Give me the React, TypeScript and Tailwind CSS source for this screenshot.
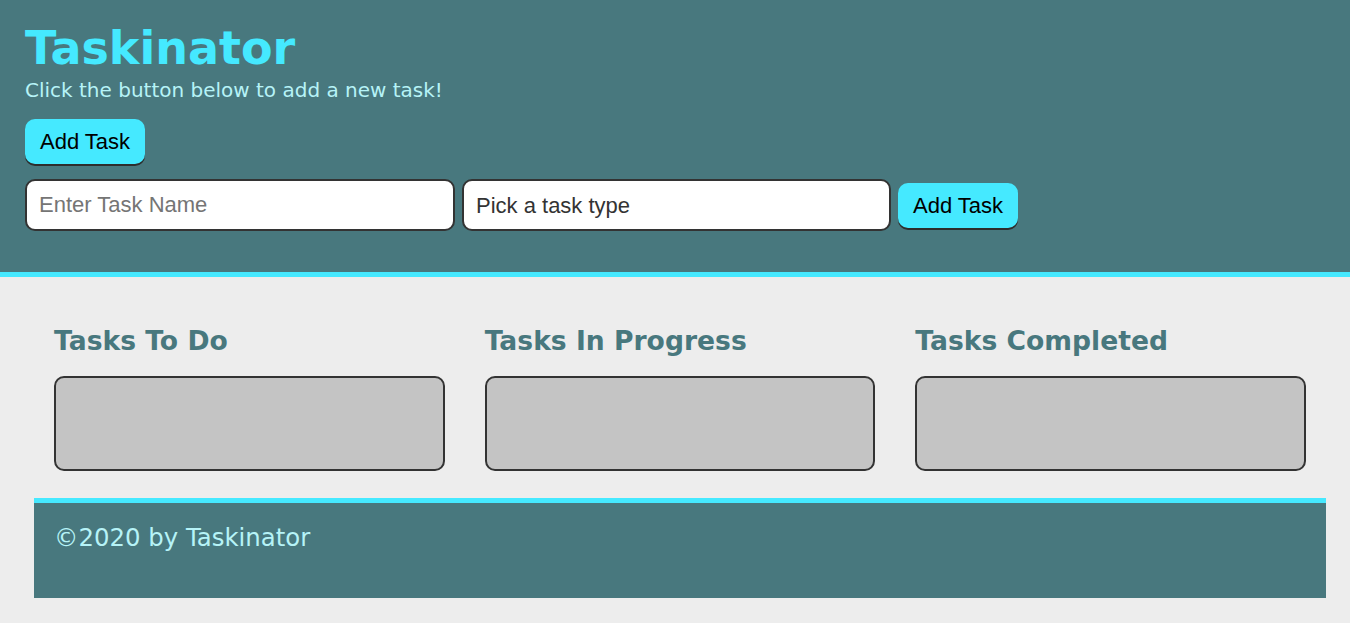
import React from 'react';

const columns = ['Tasks To Do', 'Tasks In Progress', 'Tasks Completed'];

export default function App() {
  return (
    <div className="min-h-[623px] bg-[#ededed] font-['DejaVu_Sans',Verdana,sans-serif]">
      {/* Header */}
      <header className="bg-[#48787e] border-b-[5px] border-[#45e9ff] px-[25px] pt-[20px] pb-[41px]">
        <h1 className="text-[46px] leading-[56px] font-bold text-[#45e9ff]">Taskinator</h1>
        <p className="text-[20px] leading-[28px] text-[#b6f3f7]">Click the button below to add a new task!</p>
        <button className="mt-[15px] h-[45px] px-[15px] rounded-[10px] bg-[#45e9ff] text-black text-[22px] font-['Liberation_Sans',Arial,sans-serif] shadow-[0_2px_0_#2d2d2d]">
          Add Task
        </button>
        <form className="mt-[15px] flex items-center gap-[7px]" onSubmit={e => e.preventDefault()}>
          <input
            type="text"
            placeholder="Enter Task Name"
            className="w-[430px] h-[52px] px-[12px] rounded-[10px] border-2 border-[#333] bg-white text-[22px] font-['Liberation_Sans',Arial,sans-serif] placeholder:text-[#757575] outline-none"
          />
          <div className="w-[429px] h-[52px] px-[12px] rounded-[10px] border-2 border-[#333] bg-white flex items-center text-[22px] text-[#333] font-['Liberation_Sans',Arial,sans-serif]">
            Pick a task type
          </div>
          <button className="h-[45px] px-[15px] rounded-[10px] bg-[#45e9ff] text-black text-[22px] font-['Liberation_Sans',Arial,sans-serif] shadow-[0_2px_0_#2d2d2d]">
            Add Task
          </button>
        </form>
      </header>

      {/* Task columns */}
      <main className="ml-[34px] mr-[24px] pt-[48px] grid grid-cols-3">
        {columns.map(title => (
          <section key={title} className="px-5">
            <h2 className="text-[26.6px] leading-[32px] font-bold text-[#48787e]">{title}</h2>
            <div className="mt-[19px] h-[95px] rounded-[10px] border-2 border-[#333] bg-[#c4c4c4]" />
          </section>
        ))}
      </main>

      {/* Footer */}
      <footer className="ml-[34px] mr-[24px] mt-[27px] h-[100px] bg-[#48787e] border-t-[5px] border-[#45e9ff] px-5 pt-[20px]">
        <p className="text-[24.4px] leading-[30px] text-[#b6f3f7]">©2020 by Taskinator</p>
      </footer>
    </div>
  );
}
